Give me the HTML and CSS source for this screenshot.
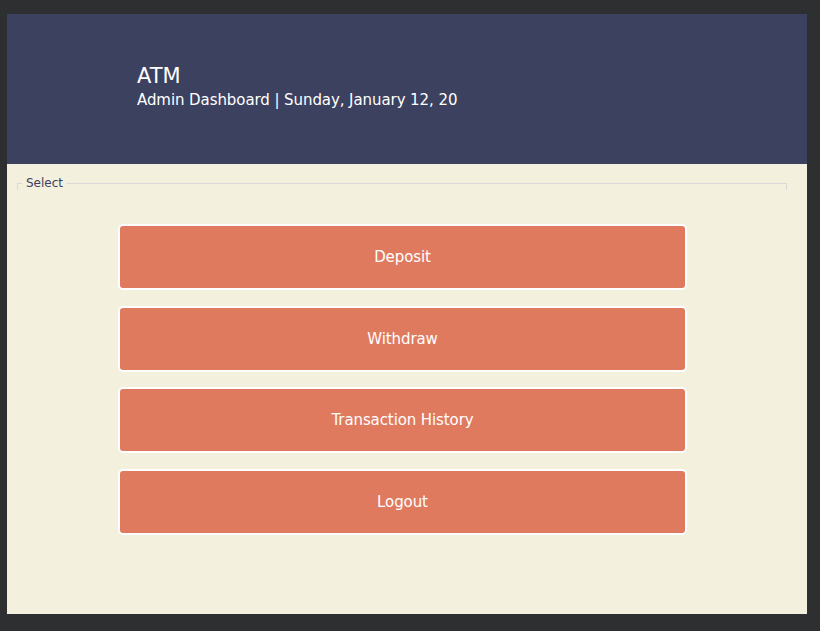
FILE: index.html
```html
<!DOCTYPE html>
<html>
<head>
<meta charset="utf-8">
<link rel="stylesheet" href="styles.css">
</head>
<body>
<div class="window">
  <header class="header">
    <div class="title">ATM</div>
    <div class="subtitle">Admin Dashboard | Sunday, January 12, 20</div>
  </header>
  <main class="content">
    <fieldset class="group">
      <legend class="group-label">Select</legend>
    </fieldset>
    <div class="actions">
      <button class="action">Deposit</button>
      <button class="action">Withdraw</button>
      <button class="action">Transaction History</button>
      <button class="action">Logout</button>
    </div>
  </main>
</div>
</body>
</html>
```
FILE: styles.css
```css
html, body {
  margin: 0;
  padding: 0;
  background: #2e2f31;
  font-family: "DejaVu Sans", Verdana, sans-serif;
}
.window {
  margin: 14px 0 0 7px;
  width: 800px;
  height: 600px;
  background: #f3f0de;
  display: flex;
  flex-direction: column;
}
.header {
  height: 150px;
  box-sizing: border-box;
  background: #3d4160;
  color: #ffffff;
  padding: 49px 0 0 130px;
}
.title {
  font-size: 21px;
  line-height: 26px;
}
.subtitle {
  font-size: 15px;
  line-height: 22px;
  letter-spacing: -0.08px;
}
.content {
  flex: 1;
  display: flex;
  flex-direction: column;
}
.group {
  margin: 12px 20px 0 10px;
  padding: 0;
  height: 12px;
  border: 1px solid #d9d9d9;
  border-bottom: none;
  box-sizing: border-box;
}
.group-label {
  margin-left: 4px;
  padding: 0 4px;
  font-size: 12px;
  line-height: 14px;
  color: #3d4160;
}
.actions {
  display: flex;
  flex-direction: column;
  gap: 15.7px;
  margin: 36px 0 0 111px;
  width: 569px;
}
.action {
  height: 66px;
  background: #e07a5f;
  color: #ffffff;
  border: 2px solid #ffffff;
  border-radius: 5px;
  font-family: "DejaVu Sans", Verdana, sans-serif;
  font-size: 15px;
  letter-spacing: -0.1px;
  padding: 0;
}
```
